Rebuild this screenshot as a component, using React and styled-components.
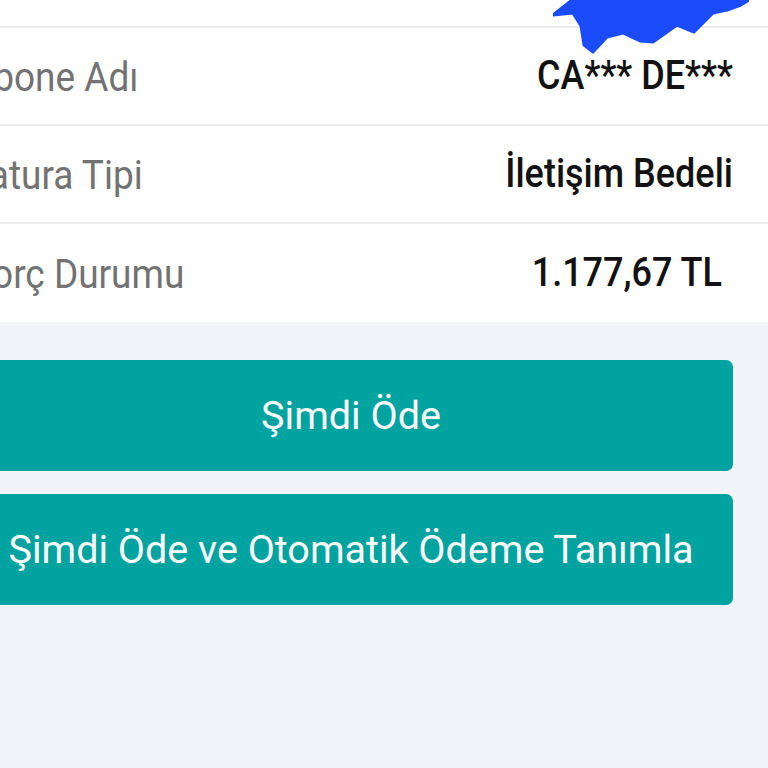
import React from "react";
import styled, { createGlobalStyle } from "styled-components";

const rows = [
  { label: "", value: "" },
  { label: "Abone Adı", value: "CA*** DE***" },
  { label: "Fatura Tipi", value: "İletişim Bedeli" },
  { label: "Borç Durumu", value: "1.177,67 TL", inset: true },
];

const App = () => {
  return (
    <Viewport>
      <GlobalStyle />
      <Screen>
        <InfoList>
          {rows.map((row, i) => (
            <Row key={i}>
              <Label>{row.label}</Label>
              <Value $inset={row.inset}>{row.value}</Value>
            </Row>
          ))}
        </InfoList>
        <Actions>
          <PayButton>Şimdi Öde</PayButton>
          <PayButton>Şimdi Öde ve Otomatik Ödeme Tanımla</PayButton>
        </Actions>
      </Screen>
      <Redaction width="196" height="54" viewBox="0 0 196 54">
        <path
          d="M19,0 L196,0 L188,5 L174,10 L160,13 L141,32 L124,25 L100,42 L87,41 L70,33 L54,37 L40,52 L31,45 L28,26 L20,13 L0,15 Z"
          fill="#1b4cfb"
          stroke="#1b4cfb"
          strokeWidth="3"
          strokeLinejoin="round"
        />
      </Redaction>
    </Viewport>
  );
};

const GlobalStyle = createGlobalStyle`
  body {
    margin: 0;
    background: #f2f4f9;
    font-family: Roboto, "Noto Sans", sans-serif;
  }
`;

const Viewport = styled.div`
  position: relative;
  width: 768px;
  height: 768px;
  overflow: hidden;
`;

const Screen = styled.div`
  width: 834px;
  margin-left: -66px;
  margin-top: -70px;
`;

const InfoList = styled.div`
  background: #ffffff;
`;

const Row = styled.div`
  height: 98px;
  box-sizing: border-box;
  display: flex;
  align-items: center;
  justify-content: space-between;
  padding: 0 35px;
  border-bottom: 2px solid #ececef;

  &:last-child {
    border-bottom: none;
  }
`;

const Label = styled.span`
  display: inline-block;
  font-size: 37px;
  color: #727272;
  transform: scaleY(1.12);
`;

const Value = styled.span`
  display: inline-block;
  font-size: 36px;
  font-weight: 500;
  color: #121212;
  margin-right: ${(p) => (p.$inset ? "11px" : "0")};
  transform: scaleY(1.12);
  transform-origin: right center;
`;

const Actions = styled.div`
  display: flex;
  flex-direction: column;
  gap: 23px;
  padding: 38px 35px 0;
`;

const PayButton = styled.button`
  height: 111px;
  border: none;
  border-radius: 7px;
  background: #00a3a0;
  color: #ffffff;
  font-family: Roboto, "Noto Sans", sans-serif;
  font-size: 39.5px;
`;

const Redaction = styled.svg`
  position: absolute;
  top: 0;
  left: 553px;
`;

export default App;
